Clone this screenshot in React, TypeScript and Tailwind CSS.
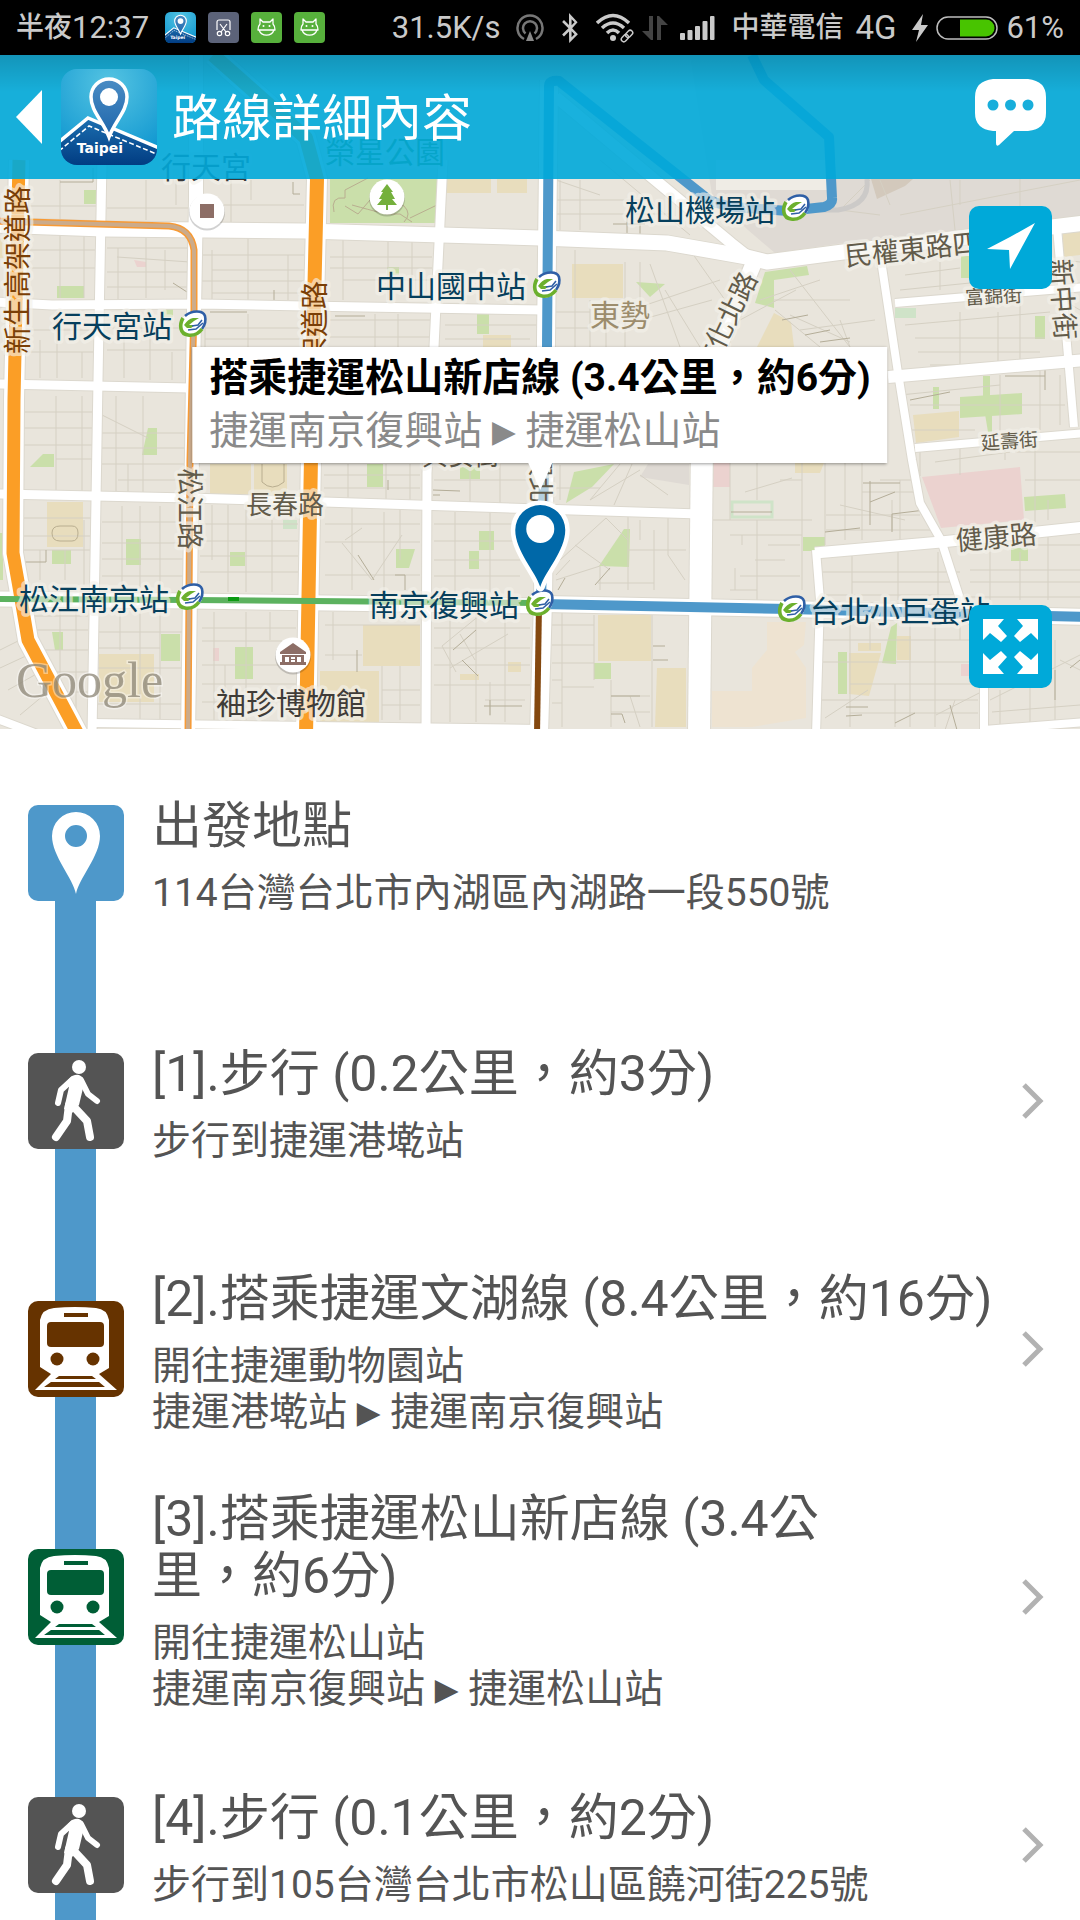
import type { ReactNode } from "react";
import { FaBluetoothB } from "react-icons/fa";

const cjk = "font-['Roboto','Noto_Sans_CJK_TC',sans-serif]";

/* ---------- status bar ---------- */

function LogoArt() {
  return (
    <>
      <defs>
        <radialGradient id="logoSky" cx="0.5" cy="0.15" r="0.9">
          <stop offset="0" stopColor="#55c4e2" />
          <stop offset="1" stopColor="#0a93cf" />
        </radialGradient>
        <linearGradient id="logoGround" x1="0" y1="0" x2="0" y2="1">
          <stop offset="0" stopColor="#1c6fb0" />
          <stop offset="1" stopColor="#003a80" />
        </linearGradient>
        <linearGradient id="logoPin" x1="0" y1="0" x2="0" y2="1">
          <stop offset="0" stopColor="#4a8cc4" />
          <stop offset="1" stopColor="#1f66ab" />
        </linearGradient>
        <clipPath id="logoClip">
          <rect width="96" height="96" rx="16" />
        </clipPath>
      </defs>
      <g clipPath="url(#logoClip)">
        <rect width="96" height="96" fill="url(#logoSky)" />
        <path d="M-2 73L27 49L98 79V98H-2Z" fill="url(#logoGround)" />
        <path d="M-2 73L27 49L98 79" fill="none" stroke="#fff" strokeWidth="3.5" />
        <path d="M-2 82L28 57L98 86" fill="none" stroke="#fff" strokeWidth="1.6" strokeDasharray="5 2.5" />
        <path
          d="M48 68C42 52 30 42 30 28A18 18 0 0 1 66 28C66 42 54 52 48 68Z"
          fill="url(#logoPin)"
          stroke="#fff"
          strokeWidth="3.5"
        />
        <circle cx="48" cy="28" r="9" fill="#fff" />
        <text x="39" y="84" textAnchor="middle" fontFamily="DejaVu Sans" fontWeight="700" fontSize="14" fill="#fff">
          Taipei
        </text>
      </g>
    </>
  );
}

function AppLogo({ className }: { className: string }) {
  return (
    <svg viewBox="0 0 96 96" className={className} aria-hidden="true">
      <LogoArt />
    </svg>
  );
}

function ScissorsBadge() {
  return (
    <svg viewBox="0 0 31 31" className="size-[31px]" aria-hidden="true">
      <rect width="31" height="31" rx="4" fill="#5c6379" />
      <g fill="none" stroke="#fff" strokeWidth="1.2">
        <path d="M9 18V10a2 2 0 0 1 2-2h9a2 2 0 0 1 2 2v8M12 12l6 8M19 12l-6 8" />
        <circle cx="11.500" cy="21.500" r="2.200" />
        <circle cx="19.500" cy="21.500" r="2.200" />
      </g>
    </svg>
  );
}

function DroidBadge() {
  return (
    <svg viewBox="0 0 31 31" className="size-[31px]" aria-hidden="true">
      <rect width="31" height="31" rx="4" fill="#57b03c" />
      <g fill="none" stroke="#fff" strokeWidth="1.3" strokeLinejoin="round">
        <path d="M9 12L9 7L12 10H19L22 7V12Q24 14 24 18H7Q7 14 9 12ZM8 18A8 8 0 0 0 23 18" />
      </g>
      <circle cx="12.500" cy="14" r="1" fill="#fff" />
      <circle cx="18.500" cy="14" r="1" fill="#fff" />
    </svg>
  );
}

function StatusBar() {
  return (
    <div className="flex h-[55px] shrink-0 items-center justify-between bg-black px-4 font-['Roboto','Noto_Sans_CJK_TC',sans-serif] text-[31px] leading-none text-[#cacaca]">
      <div className="flex items-center gap-3">
        <span className="mr-1 flex items-center">
          <span className="text-[28px] font-medium">半夜</span>12:37
        </span>
        <AppLogo className="size-[31px]" />
        <ScissorsBadge />
        <DroidBadge />
        <DroidBadge />
      </div>
      <div className="flex items-center">
        <span>31.5K/s</span>
        <svg viewBox="0 0 28 28" className="ml-4 size-7" fill="none" stroke="#777" strokeWidth="2.500" aria-hidden="true">
          <path d="M8 25A12.500 12.500 0 1 1 20 25M9.500 19.500A7 7 0 1 1 18.500 19.500" />
          <path d="M14 17L18 27H10Z" fill="#888" stroke="none" />
        </svg>
        <FaBluetoothB className="ml-4 h-[30px] w-5" aria-hidden="true" />
        <svg viewBox="0 0 38 30" className="ml-4 h-[30px] w-[38px]" fill="none" stroke="currentColor" strokeWidth="3.500" aria-hidden="true">
          <path d="M1 10Q17 -5 33 10M6 15Q17 5 28 15M11 20Q17 14 23 20" />
          <circle cx="17" cy="25" r="3" fill="currentColor" stroke="none" />
          <g strokeWidth="1.500" transform="rotate(-45 31 23)">
            <rect x="24" y="20.500" width="8" height="5" rx="2.500" />
            <rect x="30" y="20.500" width="8" height="5" rx="2.500" />
          </g>
        </svg>
        <svg viewBox="0 0 26 26" className="ml-2 size-[26px]" fill="#444" aria-hidden="true">
          <path d="M7 1H11V25H9L0 16H7ZM15 25V1H17L26 10H19V25Z" />
        </svg>
        <svg viewBox="0 0 35 26" className="ml-3 h-[26px] w-[35px]" fill="currentColor" aria-hidden="true">
          <rect x="0" y="18" width="5" height="7" rx="1" />
          <rect x="7.500" y="15" width="5" height="10" rx="1" />
          <rect x="15" y="11" width="5" height="14" rx="1" />
          <rect x="22.500" y="6" width="5" height="19" rx="1" />
          <rect x="30" y="1" width="4.500" height="24" rx="1" />
        </svg>
        <span className="ml-4 text-[28px] font-medium">中華電信</span>
        <span className="ml-3 text-[33px]">4G</span>
        <svg viewBox="0 0 16 28" className="ml-4 h-7 w-4" fill="currentColor" aria-hidden="true">
          <path d="M11 0L0 16H7L4 28L16 11H9Z" />
        </svg>
        <svg viewBox="0 0 62 24" className="ml-2 h-6 w-[62px]" aria-hidden="true">
          <rect x="1" y="1" width="60" height="22" rx="11" fill="none" stroke="#bdbdbd" strokeWidth="1.500" />
          <path d="M24 3.500H50A8.500 8.500 0 0 1 50 20.500H24Z" fill="#48c400" />
        </svg>
        <span className="ml-2">61%</span>
      </div>
    </div>
  );
}

/* ---------- map ---------- */

const parks = [
  "330,179 437,179 437,223 330,223",
  "84,190 97,190 97,204 84,204",
  "57,286 84,286 84,298 57,298",
  "387,267 399,267 399,275 387,275",
  "477,312 489,312 489,334 477,334",
  "163,305 173,305 173,317 163,317",
  "148,428 157,428 157,455 142,455",
  "755,303 765,272 807,266 809,275 774,280 774,308",
  "636,282 665,284 650,297",
  "1035,316 1045,316 1045,339 1035,339",
  "961,256 969,256 969,278 961,278",
  "933,387 939,387 939,409 933,409",
  "960,397 1022,393 1022,414 960,418",
  "983,376 990,376 990,398 983,398",
  "985,414 992,414 992,432 988,432",
  "574,472 614,464 592,487 566,503",
  "624,529 630,529 629,567 599,566",
  "803,537 825,537 825,551 803,551",
  "594,663 611,663 611,679 594,679",
  "838,652 847,652 847,694 838,694",
  "891,627 897,623 896,664 882,663",
  "1024,497 1065,494 1066,508 1025,511",
  "1011,548 1028,548 1028,561 1011,561",
  "30,467 43,454 54,454 54,467",
  "52,550 71,550 71,564 52,564",
  "126,539 141,539 141,565 126,565",
  "0,533 3,533 3,580 0,580",
  "230,552 245,552 245,566 230,566",
  "367,464 383,464 383,487 367,487",
  "460,467 480,467 480,479 460,479",
  "479,531 494,531 494,550 479,550",
  "469,551 479,551 479,569 469,569",
  "396,549 415,549 409,568 396,568",
  "161,634 180,634 180,661 161,661",
  "52,632 63,632 63,650 55,650",
  "235,647 253,647 253,679 235,679",
];

const schools = [
  "447,179 491,179 491,193 447,193",
  "497,179 527,179 527,193 497,193",
  "483,335 511,335 511,348 483,348",
  "572,264 623,264 623,298 572,298",
  "757,347 774,313 791,322 794,347",
  "913,415 959,411 959,437 916,443",
  "1063,233 1080,232 1080,255 1063,257",
  "795,463 824,463 820,473 795,473",
  "598,615 651,615 651,661 598,661",
  "657,668 686,668 686,727 655,727",
  "849,653 881,653 869,696 849,694",
  "858,643 881,643 881,651 858,651",
  "897,636 911,636 911,660 897,660",
  "47,502 83,502 83,547 47,547",
  "210,464 251,464 251,494 210,494",
  "254,464 287,464 287,495 254,495",
  "99,654 154,654 154,702 99,702",
  "363,625 420,625 420,666 363,666",
  "320,671 379,671 379,722 320,722",
  "508,662 521,662 521,672 508,672",
  "460,674 479,674 479,680 460,680",
  "0,238 4,238 4,258 0,258",
];

const hospitals = [
  "134,260 146,262 146,267 137,267",
  "922,477 1020,467 1024,520 941,528",
  "712,463 730,463 730,487 712,487",
  "213,648 219,648 219,661 213,661",
  "961,664 970,664 970,676 961,676",
];

// alleys, drawn as hairlines inside the blocks
const alleys =
  "M60 180V220M24 206H96M107 208H190M146 180V220M176 180V205M205 205H304M231 180V222M251 180V200" +
  "M60 232V298M84 232V298M24 250H96M24 268H96M107 248H190M118 248V300M146 232V298M165 250V290M107 272H190M107 287H190M117 257L190 262" +
  "M212 250V300M248 235V300M288 255V300M202 255H304M212 270H304M202 281H304M212 293H304" +
  "M343 240V300M388 238V300M412 240V300M330 257H432M330 268H432M343 280H432" +
  "M57 312V378M24 330H94M24 352H94M40 340V378M82 352V378M107 328H188M124 312V378M150 330V380M172 352V380M107 350H188" +
  "M205 314V347M248 314V347M205 328H304M205 339H304M375 314V347M398 314V347M330 320H430M330 337H430M445 325H540M445 339H530" +
  "M56 396V492M82 396V492M24 412H92M24 428H92M24 445H92M56 459H92M116 396V494M143 396V494M102 415L148 438M102 433H186M102 448H186M102 464H186M118 480H186M128 464V494" +
  "M24 518H92M24 536H92M94 550H24M40 550V580M65 550V580M84 520V585M102 522H186M102 543H186M102 559H186M102 576H186M122 506V590M140 506V590M160 506V590" +
  "M228 505V592M246 505V592M200 524H298M200 541H298M200 556H298M200 572H298M212 505V560M272 520V592" +
  "M324 475H420M324 488H420M348 464V500M386 464V500M410 464V500M434 480H540M470 464V505M500 464V505" +
  "M325 524H420M325 542H420M352 505V590M384 512V590M400 505V560M325 575H420M342 543L372 580L402 535M345 540L362 528M434 524H520M434 541H520M434 560H520M434 576H520M455 512V592M490 512V592" +
  "M24 616H88M30 630H88M60 610V720M76 610V720M34 650H88M44 672H88M60 692H88M0 650L20 640M0 668L28 655M8 690L40 672M20 715L50 690" +
  "M98 632H184M98 648H160M120 610V650M140 610V720M98 668H184M98 704H184M160 610V720" +
  "M202 628H296M202 641H296M214 612V720M246 612V720M270 612V640M202 665H280M202 684H296M202 702H296M225 665V720" +
  "M325 625H420M333 612V660M325 655H362M382 666V720M400 666V720M382 690H420M382 705H420" +
  "M434 628H530M434 648H530M434 665H530M434 685H530M450 612V722M476 612V722M505 612V722M442 646L486 610M450 668L508 634M442 646L456 672M460 634L475 660M485 700H525M490 682V716" +
  "M560 180V230M580 180V230M556 200H650M556 214H670M600 160L690 235M556 180L600 195M575 250V347M590 300V347M606 300V347M556 328H640M625 262V347M556 312H590M640 262V300M650 264L680 347M725 300L690 250M625 312L720 280M665 290L700 347M640 320L712 300" +
  "M560 465V500M620 464L590 500M632 464L614 505M640 475L668 495M590 500L640 470M556 488H600M560 560L606 518L628 540M556 580L600 566V590M628 516V590M654 530V590M668 518V555L685 580M628 550H686M598 583H654M575 545L610 570M640 520V540M556 575L570 560" +
  "M562 612V727M552 625H594M552 645H594M552 663H594M552 680H562M552 703H562M594 615V680M611 680V727M652 612V727M611 696H650M611 712H650M630 696L640 727M562 687H594" +
  "M730 463V520M712 520H812M757 463V500M802 463V590M780 480H802M745 492L792 478M730 535H802M742 535V545M757 520V600M735 568V590M730 590H757M768 545H800M755 560H785M740 576H800" +
  "M825 463V545M845 463V540M862 463V540M880 480H920M900 480V540M862 492H915M826 515H920M826 530H935M892 500V530M840 505L905 520" +
  "M852 556V600M898 552V600M938 552V600M990 545V600M1048 535V600M822 572H960M852 582H960M826 595H960M970 570H1080M970 582H1080M970 597H1080M1020 552V600" +
  "M822 640H978M850 620V727M870 620V650M910 620V727M935 620V727M822 662H978M850 684H978M822 700H978M850 713H978M895 684V727M825 718L868 690M936 715L985 690M960 620V640M955 700L945 730" +
  "M990 700L1080 655M1000 727V690M1030 640V727M1055 640V727M992 712L1080 705M1060 660L1080 670" +
  "M790 270L860 360M773 300L850 300M800 330L875 320M775 310L820 347M796 290L740 320M790 315L850 342M820 280L760 300M840 320L850 347" +
  "M905 325L1050 312M915 338H1045M918 352H1040M930 365H1030M960 312V370M998 312V365M1020 300V360M900 290L1000 280M905 275L960 268M940 262V290M1010 240V285M1035 240V280" +
  "M900 395L1000 385M910 405H1065M905 430H975M1000 375V440M1040 370V430M1060 375V425M920 452V476M935 462L1010 452M960 445V475M1005 443V460M1015 452H1080M1035 440V525M1025 480H1080M1048 500V520M1025 545H1080" +
  "M870 180L840 210L880 215M880 180L890 205M960 180V205M900 215L1080 180M950 180L955 230M1020 179V212M980 215L1000 250M1063 260L1080 262M1063 300L1080 310M1063 330L1080 325";

const alleysDark =
  "M60 182H93V168M293 182V194H300M173 283L187 292M274 302V290M335 316H365M210 312H247M24 562H46V550M388 490V480M358 555L374 580M395 575H405V590M433 490L460 491M433 495H440M613 224H645M627 218V240M640 218V240M782 320L808 315M805 335L830 330" +
  "M820 342L850 338M863 483H900M870 502L895 492M870 481V525M892 532V514L925 510M825 532L860 528M558 590L565 578M595 585L610 568M653 646H665M653 660H668M611 696H640M611 714H622L625 723M846 707H868M846 716L862 715M895 723L915 713M950 705L957 730M1055 670V700M1070 668L1080 660M1030 530H1060M453 650L476 630M462 660L478 676M490 715V700M357 672V650M484 706H522M731 512H772M1005 376H1045M1045 370V390M910 400L950 392";

// white avenues: [width, path]
const avenues: [number, string][] = [
  [9, "M102 160L98 380L96 500L92 735"],
  [14, "M196 55V200L194 310L188 735"],
  [9, "M443 160L434 347L427 473L426 735"],
  [18, "M549 80L543 600L539 735"],
  [22, "M702 440L699 735"],
  [16, "M755 260L719 347L700 463"],
  [15, "M-5 225L103 229L305 231L540 238L667 243L747 257L767 262L843 252L1085 223"],
  [11, "M556 97L654 179L731 243L750 258"],
  [9, "M-5 302L52 305L200 304L305 306L545 310"],
  [9, "M-5 384L190 388L540 398"],
  [9, "M-5 494L190 498L324 502L540 509L700 514"],
  [15, "M-5 599L190 601L540 606"],
  [8, "M-5 718L40 735M92 723L540 729"],
  [8, "M881 260L898 373L912 460L920 503L941 540L962 605L984 640V735"],
  [8, "M895 303L1085 287"],
  [12, "M888 377L1085 360"],
  [8, "M915 448L1085 433"],
  [8, "M1057 227L1074 427"],
  [11, "M815 553L941 542L1085 527"],
  [8, "M816 550L820 600L816 735"],
  [8, "M984 730L1085 722"],
  [16, "M545 604L790 609L1085 617"],
  [20, "M19 160L14 400L13 553L19 587L28 640L80 738"],
  [20, "M213 55L275 110L306 138L317 179L313 347L306 735"],
];

interface Label {
  text: string;
  x: number;
  y: number;
  size: number;
  fill: string;
  rotate?: number;
  anchor?: "start" | "middle" | "end";
}

const station = "#063f5c";
const street = "#625b4a";
const highway = "#7a3f06";

const labels: Label[] = [
  { text: "行天宮", x: 161, y: 178, size: 30, fill: "#37393c" },
  { text: "榮星公園", x: 325, y: 163, size: 30, fill: "#3c7a3a" },
  { text: "行天宮站", x: 52, y: 337, size: 30, fill: station },
  { text: "中山國中站", x: 376, y: 297, size: 30, fill: station },
  { text: "松山機場站", x: 625, y: 221, size: 30, fill: station },
  { text: "松江南京站", x: 19, y: 610, size: 30, fill: station },
  { text: "南京復興站", x: 369, y: 616, size: 30, fill: station },
  { text: "台北小巨蛋站", x: 810, y: 622, size: 30, fill: station },
  { text: "東勢", x: 590, y: 326, size: 30, fill: "#9c8c6c" },
  { text: "袖珍博物館", x: 216, y: 714, size: 30, fill: "#3f3c38" },
  { text: "長春路", x: 246, y: 514, size: 26, fill: street },
  { text: "興安街", x: 422, y: 465, size: 26, fill: street },
  { text: "健康路", x: 997, y: 547, size: 27, fill: street, rotate: -5, anchor: "middle" },
  { text: "民權東路四段", x: 846, y: 266, size: 27, fill: street, rotate: -6 },
  { text: "富錦街", x: 994, y: 303, size: 19, fill: street, rotate: -3, anchor: "middle" },
  { text: "延壽街", x: 1010, y: 448, size: 19, fill: street, rotate: -4, anchor: "middle" },
  { text: "新中街", x: 1053, y: 300, size: 27, fill: street, rotate: 86, anchor: "middle" },
  { text: "文化北路", x: 758, y: 278, size: 27, fill: street, rotate: -64, anchor: "end" },
  { text: "復興北路", x: 531, y: 425, size: 26, fill: street, rotate: 90 },
  { text: "松江路", x: 180, y: 509, size: 27, fill: street, rotate: 90, anchor: "middle" },
  { text: "新生高架道路", x: 28, y: 270, size: 28, fill: highway, rotate: -90, anchor: "middle" },
  { text: "建國高架道路", x: 325, y: 281, size: 28, fill: highway, rotate: -90, anchor: "end" },
];

function MetroMark({ x, y }: { x: number; y: number }) {
  return (
    <g transform={`translate(${x} ${y})`} fill="none">
      <ellipse rx="14" ry="11.500" fill="#fff" transform="rotate(-42)" />
      <path d="M-8 -8C-1 -14 10 -14 12 -8C13 -4 12 1 9 5" stroke="#2f5fa6" strokeWidth="2.600" />
      <path d="M-10 -6C-14 1 -13 10 -5 11C1 12 6 9 9 5" stroke="#6cb02e" strokeWidth="3.600" />
      <path d="M-9 1Q-5 -5 0 -6H6L1 -3L-4 1H2L-2 4H-6Z" fill="#6cb02e" />
      <path d="M-5 6L3 5L10 -1M-1 2L5 1L9 -4" stroke="#2f5fa6" strokeWidth="1.600" />
    </g>
  );
}

function PoiDisc({ x, y, children }: { x: number; y: number; children: ReactNode }) {
  return (
    <g transform={`translate(${x} ${y})`}>
      <circle cy="1.500" r="18" fill="#000" opacity="0.18" />
      <circle r="17.500" fill="#fff" />
      {children}
    </g>
  );
}

function MapCanvas() {
  return (
    <svg
      viewBox="0 55 1080 674"
      preserveAspectRatio="xMidYMid slice"
      className="block size-full"
      role="img"
      aria-label="地圖"
    >
      <rect x="-10" y="45" width="1100" height="700" fill="#e9e5dc" />
      <path d="M690 55H1085V218L843 243L775 253L748 230L712 195Z" fill="#dfdad4" />
      <path d="M716 160H836V190H716Z" fill="#efece5" />
      <path d="M871 179H913L905 186L877 199Z" fill="#d3c9bc" />
      <path d="M648 464H689V485L640 477Z" fill="#dfdad4" />
      <path d="M767 622H806L804 645L795 652L806 668V718L752 727H712V691H752V668L767 650Z" fill="#eee3d1" />
      <g fill="#cadfaa">
        {parks.map((p) => (
          <polygon key={p} points={p} />
        ))}
      </g>
      <g fill="#e8ddbd">
        {schools.map((p) => (
          <polygon key={p} points={p} />
        ))}
      </g>
      <g fill="#ebd2cf">
        {hospitals.map((p) => (
          <polygon key={p} points={p} />
        ))}
      </g>
      <path d="M895 308H916V318H895ZM283 520H297V529H283Z" fill="#cfe3c8" />
      <rect x="732" y="502" width="40" height="15" fill="none" stroke="#cfe3c8" strokeWidth="3" />
      <g fill="none">
        <path d={alleys} stroke="#d5d0c3" />
        <path d={alleysDark} stroke="#b4ad98" />
        <path
          d="M334 212Q330 196 345 198V190L368 178M345 206L358 214L370 200L385 214H400L412 222M352 205Q370 210 378 212Q392 200 404 206Q412 214 404 222M410 218L437 205M52 533Q52 526 60 526H72Q78 526 78 533Q78 541 72 541H60Q52 541 52 533M262 464V482Q272 492 284 482V464"
          stroke="#b9ae90"
        />
        <path d="M867 179Q870 205 838 210H815" stroke="#cccac8" strokeWidth="5" />
        {avenues.map(([w, d]) => (
          <path key={"edge" + d} d={d} stroke="#dcd8ce" strokeWidth={w + 2} strokeLinejoin="round" />
        ))}
        {avenues.map(([w, d]) => (
          <path key={d} d={d} stroke="#fff" strokeWidth={w} strokeLinejoin="round" />
        ))}

        <path d="M19 160L14 400L13 553L19 587L28 640L80 738" stroke="#fb9e26" strokeWidth="13" strokeLinejoin="round" />
        <path d="M213 55L275 110L306 138L317 179L313 347L306 735" stroke="#fb9e26" strokeWidth="14" strokeLinejoin="round" />
        <path d="M-5 221L169 226Q191 228 194 250V310L190 460L188 735" stroke="#f79a35" strokeWidth="7" />
        <path d="M-5 221L169 226Q191 228 194 250V310L190 460L188 735" stroke="#cbab8b" strokeWidth="4" />

        <path d="M-5 599L190 600L541 603" stroke="#5cb25f" strokeWidth="6" />
        <path d="M228 599H239" stroke="#0b9a12" strokeWidth="4" />
        <path d="M541 604V735" stroke="#fff" strokeWidth="12" />
        <path d="M539 604L537 735" stroke="#84480f" strokeWidth="6" />
        <path
          d="M541 603L547 347L549 86Q549 80 559 81L709 200Q725 207 747 208L788 211L824 207Q833 204 832 198L829 137L764 80L752 55"
          stroke="#4e98ca"
          strokeWidth="10"
          strokeLinejoin="round"
        />
        <path d="M541 604L790 609L1085 617" stroke="#4e98ca" strokeWidth="10" />
      </g>

      <g fontFamily="'Noto Sans CJK TC', sans-serif" stroke="#f3f1ea" strokeOpacity="0.65" strokeWidth="7" strokeLinejoin="round" paintOrder="stroke">
        {labels.map((l) => (
          <text
            key={l.text}
            x={l.x}
            y={l.y}
            fontSize={l.size}
            fill={l.fill}
            textAnchor={l.anchor ?? "start"}
            transform={l.rotate ? `rotate(${l.rotate} ${l.x} ${l.y})` : undefined}
          >
            {l.text}
          </text>
        ))}
      </g>

      <MetroMark x={193} y={324} />
      <MetroMark x={547} y={285} />
      <MetroMark x={796} y={208} />
      <MetroMark x={190} y={597} />
      <MetroMark x={540} y={603} />
      <MetroMark x={792} y={609} />

      <PoiDisc x={207} y={211}>
        <rect x="-7" y="-7" width="14" height="14" fill="#8d6e66" />
      </PoiDisc>
      <PoiDisc x={387} y={197}>
        <path d="M0 -13L6 -5H4L8 2H5L10 8H1V13H-1V8H-10L-5 2H-8L-4 -5H-6Z" fill="#74b03c" />
      </PoiDisc>
      <PoiDisc x={293} y={655}>
        <path d="M0 -12L13 -3V-1H-13V-3ZM-11 0H11V7H13V10H-13V7H-11ZM-8 2V7H8V2ZM-4 2H-2V4H2V2H4V7H2V5H-2V7H-4Z" fill="#8d6e66" fillRule="evenodd" />
      </PoiDisc>

      <text x="16" y="697" fontFamily="'Liberation Serif', serif" fontSize="50" fill="#8b8474" fillOpacity="0.75" stroke="#fff" strokeOpacity="0.4" strokeWidth="3" paintOrder="stroke">
        Google
      </text>
    </svg>
  );
}

function Play() {
  return <span className="align-[2px] font-['DejaVu_Sans'] text-[31px] leading-none">▶</span>;
}

function Callout() {
  return (
    <div className="absolute left-1/2 top-[292px] flex -translate-x-1/2 flex-col items-center">
      <div className="h-[116px] whitespace-nowrap bg-white px-[17px] pt-1 shadow-[0_1px_3px_rgba(0,0,0,0.4)]">
        <p className="text-[39px] font-bold leading-[55px] text-black">搭乘捷運松山新店線 (3.4公里，約6分)</p>
        <p className="text-[39px] leading-[50px] text-[#8a8a8a]">
          捷運南京復興站 <Play /> 捷運松山站
        </p>
      </div>
      <svg viewBox="0 0 64 130" className="h-[130px] w-16" aria-hidden="true">
        <path d="M20 0H44L32 27Z" fill="#fff" />
        <path
          d="M32 124C27 108 7 88 7 67A25 25 0 0 1 57 67C57 88 37 108 32 124Z"
          fill="#0068a8"
          stroke="#fff"
          strokeWidth="9"
          strokeLinejoin="round"
          paintOrder="stroke"
        />
        <circle cx="32" cy="66" r="14" fill="#fff" />
      </svg>
    </div>
  );
}

const mapButton =
  "absolute right-7 flex size-[83px] items-center justify-center rounded-[10px] bg-[#00a9d9]";

function MapSection() {
  return (
    <section className={`relative h-[674px] shrink-0 overflow-hidden ${cjk}`}>
      <MapCanvas />
      <Callout />
      <button type="button" aria-label="我的位置" className={`${mapButton} top-[151px]`}>
        <svg viewBox="0 0 83 83" className="size-full" fill="#fff" aria-hidden="true">
          <path d="M66 17L41 63L40 44L18 43L41 31Z" />
        </svg>
      </button>
      <button type="button" aria-label="放大地圖" className={`${mapButton} top-[550px]`}>
        <svg viewBox="0 0 83 83" className="size-full" aria-hidden="true">
          <g fill="#fff">
            <path d="M14 14H35L29 21L38 31L32 37L21 28L14 35Z" />
            <path d="M69 14V35L62 28L51 37L45 31L54 21L48 14Z" />
            <path d="M14 69V48L21 55L32 46L38 52L29 62L35 69Z" />
            <path d="M69 69H48L54 62L45 52L51 46L62 55L69 48Z" />
          </g>
        </svg>
      </button>
      <header className="absolute inset-x-0 top-0 flex h-[124px] items-center bg-[#00a9d9]/90 bg-linear-to-b from-black/15 to-transparent to-30% pl-4 pr-[34px]">
        <button type="button" aria-label="返回" className="flex items-center">
          <svg viewBox="0 0 26 54" className="h-[54px] w-[26px]" fill="#fff" aria-hidden="true">
            <path d="M26 0V54L0 27Z" />
          </svg>
          <AppLogo className="ml-[19px] size-24" />
        </button>
        <h1 className="ml-[15px] flex-1 pt-1 text-[50px] leading-none text-white">路線詳細內容</h1>
        <button type="button" aria-label="意見回饋">
          <svg viewBox="0 0 71 68" className="mb-2 h-[68px] w-[71px]" aria-hidden="true">
            <path
              d="M18 0H53Q71 2 71 18V34Q71 50 53 52H39L24 66Q21 68 21 64V52H18Q0 50 0 34V18Q0 2 18 0Z"
              fill="#fff"
            />
            <g fill="#18aedb">
              <circle cx="18" cy="26" r="5.500" />
              <circle cx="35.500" cy="26" r="5.500" />
              <circle cx="53" cy="26" r="5.500" />
            </g>
          </svg>
        </button>
      </header>
    </section>
  );
}

/* ---------- route steps ---------- */

function StartIcon() {
  return (
    <svg viewBox="0 0 96 96" className="relative size-24" aria-hidden="true">
      <rect width="96" height="96" rx="10" fill="#4e98ca" />
      <path
        d="M48 89C45 73 24 51 24 31A24 24 0 0 1 72 31C72 51 51 73 48 89ZM48 20A11 11 0 1 0 48 42A11 11 0 1 0 48 20Z"
        fill="#fff"
        fillRule="evenodd"
      />
    </svg>
  );
}

function WalkIcon() {
  return (
    <svg viewBox="0 0 96 96" className="relative size-24" aria-hidden="true">
      <rect width="96" height="96" rx="10" fill="#545454" />
      <circle cx="51" cy="14" r="7" fill="#fff" />
      <g fill="none" stroke="#fff" strokeLinecap="round" strokeLinejoin="round">
        <path d="M45 26L33 37L30 50" strokeWidth="6" />
        <path d="M53 27L60 41L69 48" strokeWidth="6" />
        <path d="M41 52L39 68L28 84" strokeWidth="8" />
        <path d="M46 54L59 68L62 84" strokeWidth="8" />
      </g>
      <path d="M40 27Q45 21 51 22Q56 24 56 31L51 52L44 60L36 56L41 34Z" fill="#fff" />
    </svg>
  );
}

function TrainIcon({ color }: { color: string }) {
  return (
    <svg viewBox="0 0 96 96" className="relative size-24" aria-hidden="true">
      <rect width="96" height="96" rx="10" fill={color} />
      <path d="M12 19Q14 8 26 7Q47 5 68 7Q79 8 81 19V67L71 73L89 89H7L23 73L12 66Z" fill="#fff" />
      <g fill={color}>
        <rect x="36" y="12" width="24" height="4" />
        <rect x="19" y="21" width="57" height="25" rx="4" />
        <circle cx="29" cy="58" r="6.500" />
        <circle cx="65" cy="58" r="6.500" />
        <path d="M31 75H64L68 78H27ZM23 81H71L77 86H16Z" />
      </g>
    </svg>
  );
}

interface Step {
  title: string;
  lines: ReactNode[];
  icon: ReactNode;
  link?: boolean;
}

const steps: Step[] = [
  {
    title: "出發地點",
    lines: ["114台灣台北市內湖區內湖路一段550號"],
    icon: <StartIcon />,
  },
  {
    title: "[1].步行 (0.2公里，約3分)",
    lines: ["步行到捷運港墘站"],
    icon: <WalkIcon />,
    link: true,
  },
  {
    title: "[2].搭乘捷運文湖線 (8.4公里，約16分)",
    lines: ["開往捷運動物園站", <>捷運港墘站 <Play /> 捷運南京復興站</>],
    icon: <TrainIcon color="#663300" />,
    link: true,
  },
  {
    title: "[3].搭乘捷運松山新店線 (3.4公\n里，約6分)",
    lines: ["開往捷運松山站", <>捷運南京復興站 <Play /> 捷運松山站</>],
    icon: <TrainIcon color="#005e36" />,
    link: true,
  },
  {
    title: "[4].步行 (0.1公里，約2分)",
    lines: ["步行到105台灣台北市松山區饒河街225號"],
    icon: <WalkIcon />,
    link: true,
  },
];

function StepRow({ step, first }: { step: Step; first: boolean }) {
  return (
    <li className="relative flex h-[248px] items-center gap-7 pl-7 pr-9 text-[#545454]">
      <div className="relative flex shrink-0 items-center self-stretch">
        <span className={`absolute bottom-0 left-[27px] w-[41px] bg-[#4e98ca] ${first ? "top-1/2" : "top-0"}`} />
        {step.icon}
      </div>
      <div className="flex-1 whitespace-nowrap pt-2">
        <h2 className="mb-[15px] whitespace-pre text-[50px] leading-[57px]">{step.title}</h2>
        {step.lines.map((line, i) => (
          <p key={i} className="text-[39px] leading-[46px]">
            {line}
          </p>
        ))}
      </div>
      {step.link && (
        <button type="button" aria-label="詳細" className="absolute inset-0 flex items-center justify-end pr-9">
          <svg viewBox="0 0 22 36" className="h-9 w-[22px]" fill="none" stroke="#b2b2b2" strokeWidth="5" aria-hidden="true">
            <path d="M2 2L18 18L2 34" />
          </svg>
        </button>
      )}
    </li>
  );
}

export default function App() {
  return (
    <div className="flex h-screen flex-col overflow-hidden bg-white">
      <StatusBar />
      <MapSection />
      <ol className={`min-h-0 flex-1 overflow-y-auto [scrollbar-width:none] ${cjk}`}>
        {steps.map((step, i) => (
          <StepRow key={step.title} step={step} first={i === 0} />
        ))}
      </ol>
    </div>
  );
}
